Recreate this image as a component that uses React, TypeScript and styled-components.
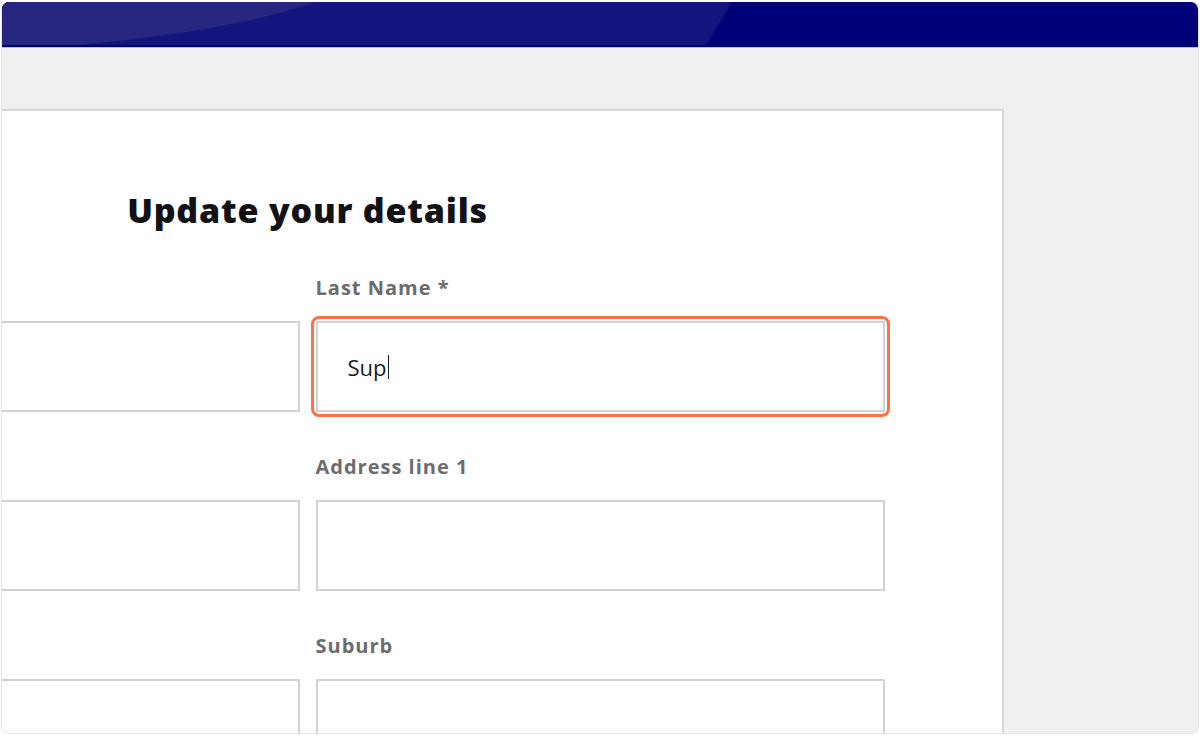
import React from "react";
import styled, { createGlobalStyle } from "styled-components";

const Global = createGlobalStyle`
  html, body { margin: 0; padding: 0; background: #ffffff; }
  body { font-family: "Open Sans", "Liberation Sans", sans-serif; }
  * { box-sizing: border-box; }
`;

const Frame = styled.div`
  margin: 2px 1px 0 1px;
  height: 732px;
  border: 1px solid #e3e4e9;
  border-top: none;
  border-radius: 8px;
  overflow: hidden;
  background: #eff0f2;
  display: flex;
  flex-direction: column;
`;

const Header = styled.header`
  position: relative;
  flex: 0 0 auto;
  height: 45px;
  background: #000078;
  border-bottom: 2px solid #00006c;
  box-shadow: 0 1px 0 #babad4;
  overflow: hidden;

  &::before {
    content: "";
    position: absolute;
    inset: 0;
    background: #14147e;
    clip-path: polygon(0 0, 730px 0, 704px 100%, 0 100%);
  }

  &::after {
    content: "";
    position: absolute;
    left: -594px;
    top: -170px;
    width: 988px;
    height: 220px;
    border-radius: 50%;
    background: #272782;
  }
`;

const Stage = styled.main`
  flex: 1 1 auto;
  display: flex;
  flex-direction: column;
  align-items: flex-start;
  padding-top: 62px;
`;

const Card = styled.section`
  margin-left: -389px;
  width: 1391px;
  flex: 1 0 auto;
  background: #ffffff;
  border-top: 2px solid #d6d6d8;
  border-right: 2px solid #d6d6d8;
  display: flex;
  flex-direction: column;
  align-items: center;
  padding-top: 79px;
`;

const Title = styled.h1`
  margin: 0;
  font-family: "Open Sans", "Liberation Sans", sans-serif;
  font-weight: 800;
  font-size: 34px;
  line-height: 41px;
  color: #111116;
  letter-spacing: 0.8px;
`;

const Form = styled.div`
  margin-top: 45px;
  width: 1154px;
  display: grid;
  grid-template-columns: 569px 569px;
  column-gap: 16px;
  row-gap: 43px;
`;

const Field = styled.div`
  display: flex;
  flex-direction: column;
  gap: 21px;
`;

const Label = styled.label`
  font-family: "Open Sans", "Liberation Sans", sans-serif;
  font-weight: 700;
  font-size: 20px;
  line-height: 24px;
  letter-spacing: 1px;
  color: #6c6c6e;
`;

const Box = styled.div<{ $focused?: boolean }>`
  position: relative;
  height: 91px;
  border: 2px solid #d2d2d4;
  background: #fff;
  display: flex;
  align-items: center;
  padding-left: 30px;
  font-family: "Open Sans", "Noto Sans", sans-serif;
  font-size: 22px;
  color: #1b1b1f;

  ${(p) =>
    p.$focused &&
    `
    &::after {
      content: "";
      position: absolute;
      inset: -7px;
      border: 3px solid #ff7043;
      border-radius: 8px;
      pointer-events: none;
    }
  `}
`;

const Caret = styled.span`
  display: inline-block;
  width: 1px;
  height: 24px;
  margin-left: 1px;
  background: #1b1b1f;
`;

export default function App() {
  return (
    <>
      <Global />
      <Frame>
        <Header />
        <Stage>
          <Card>
            <Title>Update your details</Title>
            <Form>
              <Field>
                <Label>First Name *</Label>
                <Box />
              </Field>
              <Field>
                <Label>Last Name *</Label>
                <Box $focused>
                  Sup
                  <Caret />
                </Box>
              </Field>
              <Field>
                <Label>Email</Label>
                <Box />
              </Field>
              <Field>
                <Label>Address line 1</Label>
                <Box />
              </Field>
              <Field>
                <Label>Phone</Label>
                <Box />
              </Field>
              <Field>
                <Label>Suburb</Label>
                <Box />
              </Field>
            </Form>
          </Card>
        </Stage>
      </Frame>
    </>
  );
}
